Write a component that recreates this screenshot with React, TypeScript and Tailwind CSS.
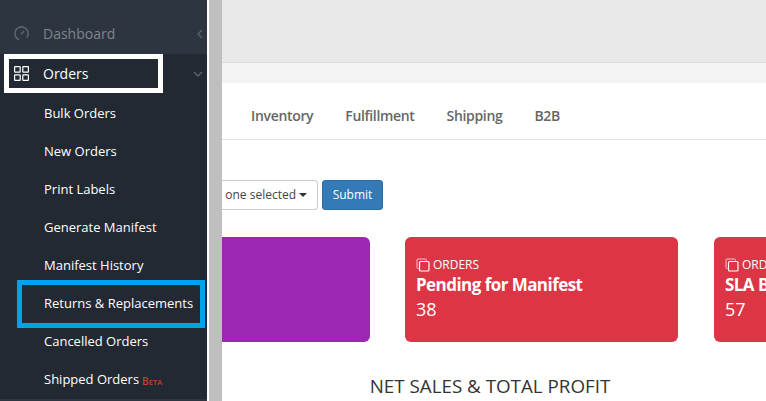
const subItems = [
  "Bulk Orders",
  "New Orders",
  "Print Labels",
  "Generate Manifest",
  "Manifest History",
  "Returns & Replacements",
  "Cancelled Orders",
];

function CopyIcon() {
  return (
    <svg width="14" height="14" viewBox="0 0 14 14" fill="none" className="shrink-0">
      <path d="M2.5 10.5 H2 a1 1 0 0 1 -1 -1 V2 a1 1 0 0 1 1 -1 H9.5 a1 1 0 0 1 1 1 V2.5" stroke="#f3c4ca" strokeWidth="1" />
      <rect x="3.5" y="3.5" width="9.5" height="9.5" rx="1" stroke="#ffffff" strokeWidth="1.2" />
    </svg>
  );
}

function OrderCard({ title, count, className }: { title: string; count: string; className: string }) {
  return (
    <div className={"h-[105px] rounded-[6px] bg-[#dc3545] pl-[11px] pt-[20px] text-white overflow-hidden " + className}>
      <div className="flex items-center gap-[3px] text-[12px] leading-[16px] whitespace-nowrap">
        <CopyIcon />
        ORDERS
      </div>
      <div className="text-[17px] leading-[24px] font-bold whitespace-nowrap tracking-[-0.55px]">{title}</div>
      <div className="-mt-[1px] text-[18px] leading-[26px]">{count}</div>
    </div>
  );
}

export default function App() {
  return (
    <div className="relative flex h-[401px] w-[766px] overflow-hidden bg-white font-['Open_Sans',sans-serif]">
      {/* SIDEBAR */}
      <aside className="flex w-[207px] shrink-0 flex-col bg-[#222932]">
        <div className="flex h-[54px] shrink-0 items-center bg-[#2c3540] pl-[14px] pr-[4px] pt-[13px] text-[14px] text-[#80858b]">
          <svg width="15" height="15" viewBox="0 0 15 15" fill="none" className="shrink-0">
            <circle cx="7.5" cy="7.5" r="6.6" stroke="#5c636c" strokeWidth="1.6" strokeDasharray="33 8.5" transform="rotate(110 7.5 7.5)" />
            <path d="M7 8.5 L10 5" stroke="#5c636c" strokeWidth="1.6" />
          </svg>
          <span className="ml-[14px] flex-1">Dashboard</span>
          <svg width="6" height="10" viewBox="0 0 6 10" fill="none">
            <path d="M5 1 L1 5 L5 9" stroke="#5d646d" strokeWidth="1.4" />
          </svg>
        </div>
        <div className="flex h-[39px] shrink-0 items-center pl-[14px] pr-[4px] text-[14px] text-white">
          <svg width="15" height="15" viewBox="0 0 15 15" fill="none" className="shrink-0">
            <rect x="0.6" y="0.6" width="5.6" height="5.6" rx="0.5" stroke="#ffffff" strokeWidth="1.2" />
            <rect x="8.8" y="0.6" width="5.6" height="5.6" rx="0.5" stroke="#ffffff" strokeWidth="1.2" />
            <rect x="0.6" y="8.8" width="5.6" height="5.6" rx="0.5" stroke="#ffffff" strokeWidth="1.2" />
            <rect x="8.8" y="8.8" width="5.6" height="5.6" rx="0.5" stroke="#ffffff" strokeWidth="1.2" />
          </svg>
          <span className="ml-[14px] flex-1">Orders</span>
          <svg width="10" height="6" viewBox="0 0 10 6" fill="none">
            <path d="M1 1 L5 5 L9 1" stroke="#5d646d" strokeWidth="1.4" />
          </svg>
        </div>
        <ul className="pt-[2px] text-[13px] text-white">
          {subItems.map((item) => (
            <li key={item} className="flex h-[38px] items-center whitespace-nowrap pl-[44px]">
              {item}
            </li>
          ))}
          <li className="flex h-[38px] items-center whitespace-nowrap pl-[44px]">
            Shipped Orders
            <span className="ml-[3px] mt-[2px] text-[7.5px] font-semibold text-[#c8402a]">
              <span className="text-[10px]">B</span>ETA
            </span>
          </li>
        </ul>
        <div className="flex-1 bg-[#2c3540]" />
      </aside>

      {/* DIVIDER */}
      <div className="w-[2px] shrink-0 bg-white" />
      <div className="w-[13px] shrink-0 bg-[#bfbfbf]" />

      {/* MAIN */}
      <main className="flex min-w-0 flex-1 flex-col">
        <div className="h-[63px] shrink-0 border-b border-[#dcdcdc] bg-[#e9e9e9]" />
        <div className="h-[20px] shrink-0 bg-[#f4f4f4]" />
        <nav className="flex h-[57px] shrink-0 items-center gap-[32px] border-b border-[#e2e2e2] pl-[29px] pt-[8px] text-[14px] font-semibold tracking-[-0.33px] text-[#666666]">
          <span>Inventory</span>
          <span>Fulfillment</span>
          <span>Shipping</span>
          <span>B2B</span>
        </nav>
        <div className="mt-[40px] flex h-[30px] shrink-0 items-center gap-[4px]">
          <div className="flex h-[30px] w-[96px] items-center justify-end rounded-r-[4px] border border-l-0 border-[#cccccc] pr-[10px] text-[12px] text-[#444444] whitespace-nowrap">
            one selected
            <span className="ml-[3px] h-0 w-0 border-x-[4px] border-t-[4px] border-x-transparent border-t-[#333333]" />
          </div>
          <button className="h-[30px] w-[61px] rounded-[3px] border border-[#2e6da4] bg-[#337ab7] text-[12px] text-white">
            Submit
          </button>
        </div>
        <div className="mt-[27px] flex shrink-0 gap-[35px]">
          <div className="h-[105px] w-[148px] shrink-0 rounded-r-[6px] bg-[#9c27b0]" />
          <OrderCard title="Pending for Manifest" count="38" className="w-[273px] shrink-0" />
          <div className="ml-[1px] min-w-0 flex-1">
            <OrderCard title="SLA Breached" count="57" className="w-[200px]" />
          </div>
        </div>
        <h2 className="mt-[32px] w-[536px] text-center text-[18.8px] leading-[24px] text-[#333333] whitespace-nowrap">
          NET SALES &amp; TOTAL PROFIT
        </h2>
      </main>

      {/* HIGHLIGHT BOXES */}
      <div className="absolute left-[4px] top-[54px] h-[39px] w-[159px] border-[5px] border-white" />
      <div className="absolute left-[17px] top-[280px] h-[48px] w-[188px] border-[5px] border-[#00a2e8]" />
    </div>
  );
}
